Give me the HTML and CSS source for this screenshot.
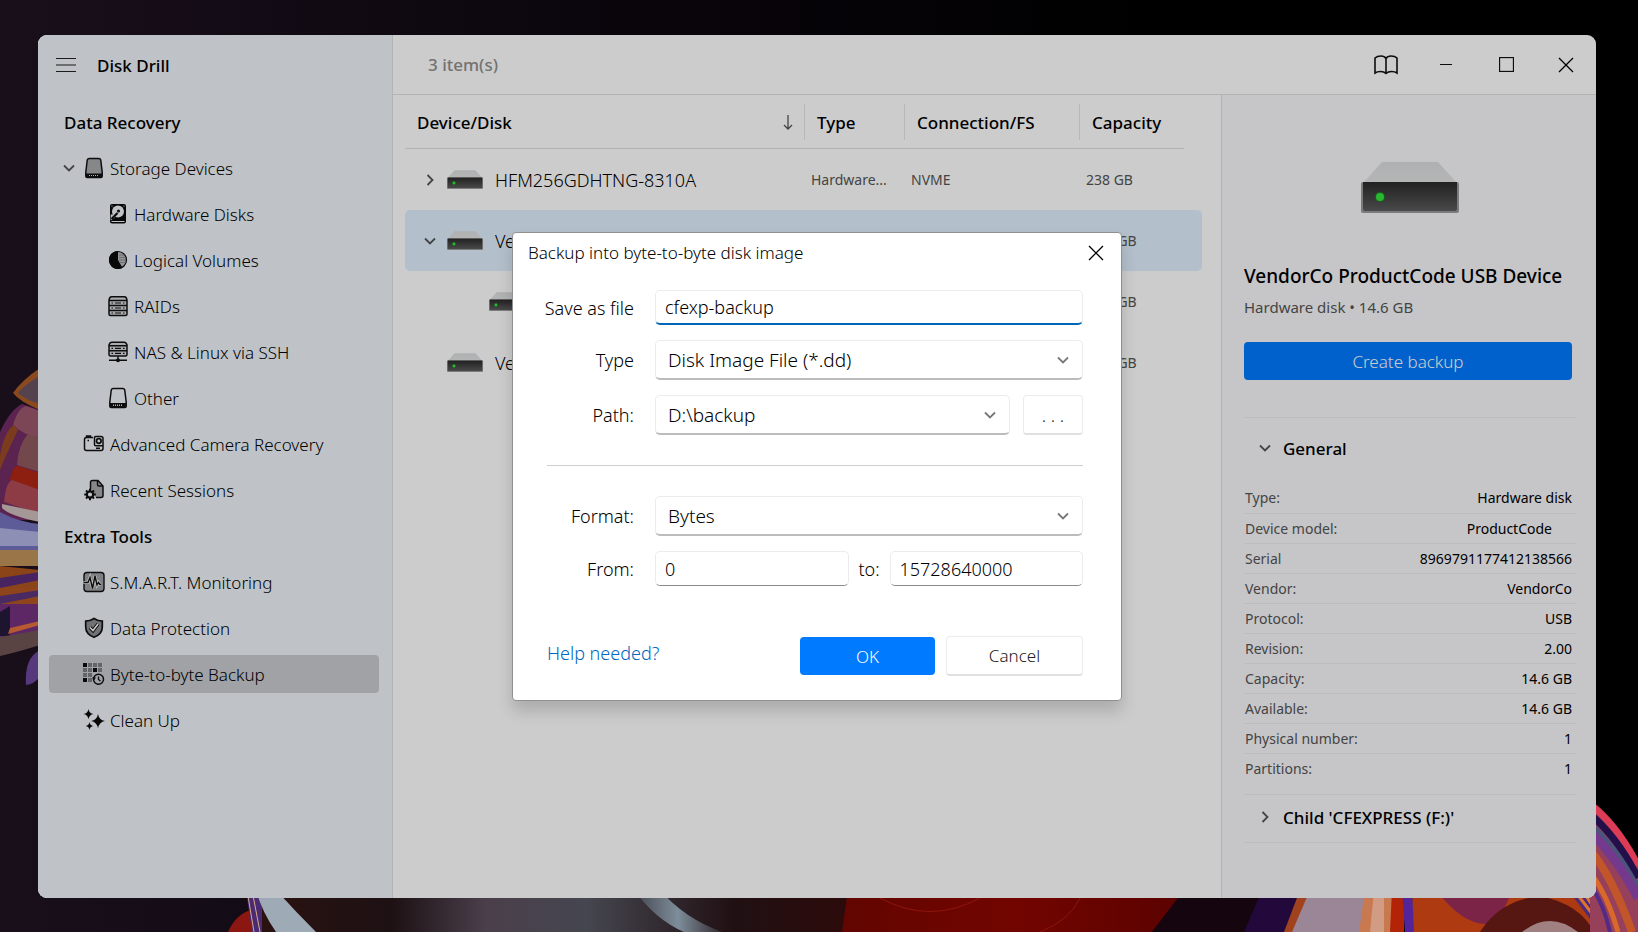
FILE: index.html
```html
<!DOCTYPE html>
<html lang="en">
<head>
    <meta charset="UTF-8">
    <meta name="viewport" content="width=device-width, initial-scale=1.0">
    <title>Disk Drill</title>
    <link rel="stylesheet" href="styles.css">
</head>
<body>

<!-- shared icons -->
<svg class="sprite" aria-hidden="true">
    <defs>
        <linearGradient id="diskFront" x1="0" y1="0" x2="0" y2="1">
            <stop offset="0" stop-color="#2a2a2a"/>
            <stop offset="1" stop-color="#5c5c5c"/>
        </linearGradient>
        <linearGradient id="diskTop" x1="0" y1="0" x2="0" y2="1">
            <stop offset="0" stop-color="#dcddde"/>
            <stop offset="1" stop-color="#e2e3e4"/>
        </linearGradient>
    </defs>
    <symbol id="disk" viewBox="0 0 98 51">
        <path d="M21 0h56l19 21H2z" fill="url(#diskTop)"/>
        <rect x="0" y="20" width="98" height="31" rx="2" fill="#9a9a9c"/>
        <path d="M2 20h94v27q0 2-2 2H4q-2 0-2-2z" fill="url(#diskFront)"/>
        <circle cx="19" cy="35" r="5" fill="#1d7a22"/>
        <circle cx="19" cy="35" r="4" fill="#35e53c"/>
    </symbol>
    <symbol id="chev-down" viewBox="0 0 12 12">
        <path d="M1 3.500l5 5 5-5" fill="none" stroke="currentColor" stroke-width="1.800"/>
    </symbol>
    <symbol id="chev-right" viewBox="0 0 12 12">
        <path d="M3.500 1l5 5-5 5" fill="none" stroke="currentColor" stroke-width="1.800"/>
    </symbol>
    <symbol id="close" viewBox="0 0 16 16">
        <path d="M1 1l14 14M15 1L1 15" fill="none" stroke="currentColor" stroke-width="1.300"/>
    </symbol>
</svg>

<svg class="wallpaper" viewBox="0 0 1638 932" preserveAspectRatio="none" aria-hidden="true">
    <defs>
        <linearGradient id="night" x1="0" x2="1" y1="0" y2="0">
            <stop offset="0" stop-color="#190f1b"/>
            <stop offset=".35" stop-color="#0b060d"/>
            <stop offset=".7" stop-color="#000"/>
        </linearGradient>
        <linearGradient id="haze" x1="0" x2="1" y1="0" y2="0">
            <stop offset="0" stop-color="#2b1210"/>
            <stop offset=".22" stop-color="#1d1114"/>
            <stop offset=".38" stop-color="#4a3f4b"/>
            <stop offset=".55" stop-color="#45464f"/>
            <stop offset=".8" stop-color="#201013"/>
            <stop offset="1" stop-color="#2d0a0a"/>
        </linearGradient>
        <linearGradient id="wine" x1="0" x2="1" y1="0" y2="0">
            <stop offset="0" stop-color="#620500"/>
            <stop offset=".5" stop-color="#720500"/>
            <stop offset="1" stop-color="#5a0200"/>
        </linearGradient>
        <linearGradient id="streak" x1="0" x2="1" y1="0" y2="0">
            <stop offset="0" stop-color="#45464f"/>
            <stop offset=".5" stop-color="#7d8d9a"/>
            <stop offset="1" stop-color="#33292f"/>
        </linearGradient>
    </defs>
    <rect width="1638" height="932" fill="url(#night)"/>
    <!-- left bloom -->
    <path d="M40 368Q22 380 13 393Q20 402 40 410z" fill="#8a4a1d"/>
    <path d="M40 376Q25 384 18 393Q26 400 40 404z" fill="#54424f"/>
    <path d="M0 432Q10 410 22 404L40 410V520H0z" fill="#5a2350"/>
    <path d="M13 425Q18 408 26 406L40 411V438Q25 436 13 425z" fill="#7c4657"/>
    <path d="M0 455Q5 430 14 425L18 430Q6 455 0 470z" fill="#7a3b1e"/>
    <path d="M17 465Q18 445 28 434L40 438V472z" fill="#73484c"/>
    <path d="M10 480Q12 466 18 466L40 473V492z" fill="#8c1f10"/>
    <path d="M4 502Q6 482 12 480L40 490V514z" fill="#8d3c46"/>
    <path d="M2 504L40 512V522Q10 516 2 508z" fill="#a49795"/>
    <path d="M0 512Q18 522 40 524V550H0z" fill="#5d5b98"/>
    <path d="M0 528L40 532V546H0z" fill="#8d90b4"/>
    <path d="M0 550H40V566H0z" fill="#9a7547"/>
    <path d="M0 566L40 570V592H0z" fill="#8a4418"/>
    <path d="M0 578L40 572V580L0 588z" fill="#472461"/>
    <path d="M0 588H40V608H0z" fill="#8f451c"/>
    <path d="M0 596L40 590V596L0 604z" fill="#4a2a63"/>
    <path d="M0 604H40V638H0z" fill="#5c2764"/>
    <path d="M0 612L10 606V636H0z" fill="#1d1530"/>
    <path d="M10 628L40 621V625L8 634z" fill="#b75a31"/>
    <path d="M0 637L40 630V645Q18 652 0 656z" fill="#5a4443"/>
    <path d="M26 685Q24 658 40 650V677Q34 684 26 685z" fill="#55397c"/>
    <!-- lower edge -->
    <path d="M228 932Q236 913 256 908V932z" fill="#8c1712"/>
    <path d="M262 890H852V932H262z" fill="url(#haze)"/>
    <path d="M634 890H660Q684 918 722 932H684Q656 920 634 890z" fill="url(#streak)"/>
    <path d="M246 890H262V932H252z" fill="#4a2a70"/>
    <path d="M247 890L254 932M252 890L260 932" stroke="#d9ab8e" stroke-width="1"/>
    <path d="M256 890H276Q296 912 316 932H276Q262 912 256 890z" fill="#9eabb6"/>
    <path d="M848 890H1186L1152 932H842z" fill="url(#wine)"/>
    <path d="M880 898Q930 925 980 898M1040 932Q1070 920 1080 898" fill="none" stroke="#8d160c"/>
    <path d="M1184 890H1305L1284 932H1152z" fill="#15050f"/>
    <path d="M1262 890H1302L1286 932H1244z" fill="#23083b"/>
    <path d="M1300 890H1312L1294 932H1284z" fill="#a0421d"/>
    <path d="M1310 890H1366L1360 932H1292z" fill="#9b8697"/>
    <path d="M1365 890H1394V932H1359z" fill="#c9794f"/>
    <path d="M1374 890H1384V932H1370z" fill="#d29b83"/>
    <path d="M1392 890H1404V932H1390z" fill="#b32306"/>
    <path d="M1402 890H1412L1415 932H1405z" fill="#54259a"/>
    <path d="M1412 890H1600V932H1414z" fill="#ae3a12"/>
    <path d="M1436 890Q1462 924 1486 924Q1502 920 1512 890z" fill="#7b2448"/>
    <path d="M1480 932Q1500 900 1540 896Q1580 904 1594 932z" fill="#561612"/>
    <path d="M1522 932Q1550 910 1578 932z" fill="#a08080"/>
    <path d="M1568 890L1600 932H1614L1592 890z" fill="#4c2c78"/>
    <path d="M1574 890L1606 932M1582 890L1610 932" stroke="#e07331" stroke-width="3"/>
    <!-- right bloom -->
    <path d="M1590 802Q1618 822 1638 862V932H1590z" fill="#96405c"/>
    <path d="M1590 804Q1618 826 1638 866" fill="none" stroke="#dc3c55" stroke-width="7"/>
    <path d="M1590 814Q1618 838 1638 878" fill="none" stroke="#23104a" stroke-width="7"/>
    <path d="M1590 824Q1616 846 1638 888" fill="none" stroke="#4c547c" stroke-width="5"/>
    <path d="M1590 832Q1616 856 1638 898" fill="none" stroke="#74398c" stroke-width="9"/>
    <path d="M1590 850Q1612 876 1632 932" fill="none" stroke="#c2562a" stroke-width="8"/>
    <path d="M1590 872Q1608 896 1618 932" fill="none" stroke="#d9692b" stroke-width="5"/>
    <path d="M1590 884Q1604 904 1610 932" fill="none" stroke="#532a86" stroke-width="4"/>
</svg>

<div class="window">
    <aside class="sidebar">
        <div class="brand">
            <button class="icon-btn" aria-label="Menu">
                <svg width="20" height="14" viewBox="0 0 20 14"><path d="M0 .5h20M0 7h20M0 13.500h20" stroke="#222" stroke-width="1.200"/></svg>
            </button>
            <h1>Disk Drill</h1>
        </div>
        <nav>
            <h2>Data Recovery</h2>
            <a href="#" class="nav-item parent">
                <svg class="chev" width="12" height="12"><use href="#chev-down"/></svg>
                <svg class="ico" viewBox="0 0 22 22"><path d="M4.200 3.500Q4.400 1.500 6.400 1.500h9.200q2 0 2.200 2L19.200 15v4q0 1.500-1.500 1.500H4.300q-1.500 0-1.500-1.500v-4z" fill="#a8a9ac" stroke="#111" stroke-width="1.500"/><path d="M2.800 16.500h16.400v3.700H2.800z" fill="#111"/><path d="M6 18.500h9" stroke="#ddd" stroke-width="1" stroke-dasharray="1 1"/></svg>
                Storage Devices
            </a>
            <a href="#" class="nav-item child">
                <svg class="ico" viewBox="0 0 22 22"><rect x="3" y="1" width="16" height="19.500" rx="2" fill="#0a0a0a"/><circle cx="11" cy="8.500" r="6" fill="#eff4f9"/><path d="M3.700 11.500h5l-1 3-4 3z" fill="#eff4f9"/><circle cx="11.500" cy="8" r="1.500" fill="#0a0a0a"/><path d="M4.500 16L10.500 10" stroke="#0a0a0a" stroke-width="2.200"/><path d="M4.500 18.500h13" stroke="#eff4f9" stroke-width="1.200"/><circle cx="5" cy="3" r=".6" fill="#fff"/><circle cx="17" cy="3" r=".6" fill="#fff"/></svg>
                Hardware Disks
            </a>
            <a href="#" class="nav-item child">
                <svg class="ico" viewBox="0 0 22 22"><circle cx="11" cy="11" r="8.500" fill="#b9bbbf" stroke="#0a0a0a" stroke-width="1.200"/><path d="M11 2A9 9 0 1 0 15.500 18.800L11 11z" fill="#0a0a0a"/><path d="M12 6h6M12 8.500h7M12 11h7M13 13.500h6" stroke="#777" stroke-width=".7"/></svg>
                Logical Volumes
            </a>
            <a href="#" class="nav-item child">
                <svg class="ico" viewBox="0 0 22 22"><path d="M4.500 1.800h13Q19.500 2 20 5v14q0 1.500-1.500 1.500h-15Q2 20.500 2 19V5q.5-3 2.500-3.200z" fill="#d4d6da" stroke="#111" stroke-width="1.500"/><path d="M2 5.500h18M2 10.500h18M2 15.500h18" stroke="#111" stroke-width="1.500"/><path d="M4.500 8h1.500M8 8h6M16 8h1.500M4.500 13h1.500M8 13h6M16 13h1.500M4.500 18h1.500M8 18h6M16 18h1.500" stroke="#111" stroke-width="1.200"/></svg>
                RAIDs
            </a>
            <a href="#" class="nav-item child">
                <svg class="ico" viewBox="0 0 22 22"><path d="M4.500 1.200h13Q19.500 1.500 20 4v9.500q0 1.500-1.500 1.500h-15Q2 15 2 13.500V4q.5-2.500 2.500-2.800z" fill="#d4d6da" stroke="#111" stroke-width="1.500"/><path d="M2 4.700h18M2 9.800h18" stroke="#111" stroke-width="1.500"/><path d="M4.500 7.300h1.500M8 7.300h6M16 7.300h1.500M4.500 12.400h1.500M8 12.400h6M16 12.400h1.500" stroke="#111" stroke-width="1.200"/><path d="M11 15v4M2 19.200h18" stroke="#111" stroke-width="1.400"/><circle cx="11" cy="19.200" r="2" fill="#111"/></svg>
                NAS &amp; Linux via SSH
            </a>
            <a href="#" class="nav-item child">
                <svg class="ico" viewBox="0 0 22 22"><path d="M4.200 3.500Q4.400 1.500 6.400 1.500h9.200q2 0 2.200 2L19.200 15v4q0 1.500-1.500 1.500H4.300q-1.500 0-1.500-1.500v-4z" fill="none" stroke="#111" stroke-width="1.500"/><path d="M2.800 16h16.400v4.200H2.800z" fill="#111"/><path d="M6 18.300h9" stroke="#ddd" stroke-width="1.500" stroke-dasharray="1 1"/></svg>
                Other
            </a>
            <a href="#" class="nav-item">
                <svg class="ico" viewBox="0 0 22 22"><path d="M10 4.500H3.500Q1.500 4.500 1.500 6.500v9q0 2 2 2H18q2 0 2-2V5.500Q20 3.500 18 3.500h-5.500q-1 0-1 1v7q0 1.300 1.300 1.300H20M3.500 4v-1h4v1M4.500 7.500h1.500M13 15.200h4" fill="none" stroke="#111" stroke-width="1.500"/><circle cx="15.800" cy="8" r="2.300" fill="none" stroke="#111" stroke-width="1.700"/></svg>
                Advanced Camera Recovery
            </a>
            <a href="#" class="nav-item">
                <svg class="ico" viewBox="0 0 22 22"><path d="M7.500 10V3.500q0-2 2-2h5.500l5 5.500v9.500q0 2-2 2h-5" fill="#a8a9ac" stroke="#111" stroke-width="1.500"/><path d="M14.500 2v3.500q0 1.500 1.500 1.500h4" fill="none" stroke="#111" stroke-width="1.400"/><circle cx="7" cy="15.500" r="3.200" fill="#eff4f9" stroke="#111" stroke-width="2.200"/><path d="M7 9.700v2.500M7 18.800v2.500M1.200 15.500h2.500M10.300 15.500h2.500M3 11.500l1.500 1.500M9.500 18l1.500 1.500M11 11.500L9.500 13M4.500 18L3 19.500" stroke="#111" stroke-width="2"/></svg>
                Recent Sessions
            </a>

            <h2>Extra Tools</h2>
            <a href="#" class="nav-item">
                <svg class="ico" viewBox="0 0 22 22"><rect x="1" y="1.500" width="20" height="19" rx="3" fill="#a0a2a5" stroke="#111" stroke-width="1.400"/><path d="M.5 11.500H5L7 6.500l2.500 11L12 5l2 9 1.500-2.500 1.500 2H18" fill="none" stroke="#eee" stroke-width="3"/><path d="M1 11.500h4L7 6.500l2.500 11L12 5l2 9 1.500-2.500 1.500 2H18" fill="none" stroke="#111" stroke-width="1.400"/></svg>
                S.M.A.R.T. Monitoring
            </a>
            <a href="#" class="nav-item">
                <svg class="ico" viewBox="0 0 22 22"><path d="M11 1.500Q15 4.200 19.300 4.200V10q0 7-8.300 10.300Q2.700 17 2.700 10V4.200Q7 4.200 11 1.500z" fill="#8d8f93" stroke="#111" stroke-width="1.700"/><path d="M7 10.500l3 3 5-6.500" fill="none" stroke="#111" stroke-width="3.500"/><path d="M7 10.500l3 3 5-6.500" fill="none" stroke="#fff" stroke-width="1.500"/></svg>
                Data Protection
            </a>
            <a href="#" class="nav-item active">
                <svg class="ico" viewBox="0 0 22 22"><path d="M0 0h4v4H0zM10 5h4v4h-4zM0 15h4v4H0z" fill="#0a0a0a"/><path d="M5 0h4v4H5zM10 0h4v4h-4zM15 0h4v4h-4zM0 5h4v4H0zM5 5h4v4H5zM15 5h4v4h-4zM0 10h4v4H0zM5 10h4v4H5zM5 15h4v4H5z" fill="#7d7f84"/><circle cx="15.500" cy="16.300" r="5" fill="#c8cbd0" stroke="#111" stroke-width="1.500"/><path d="M15.500 13.500v3l2 1.500" fill="none" stroke="#111" stroke-width="1.300"/><path d="M9 14.500h4l-2 3z" fill="#111"/></svg>
                Byte-to-byte Backup
            </a>
            <a href="#" class="nav-item">
                <svg class="ico" viewBox="0 0 22 22"><path d="M15 5q1 6 7 7-6 1-7 7.500-1-6.500-7-7.500 6-1 7-7zM5.500 0q.7 4.300 5 5-4.300.7-5 5.200-.7-4.500-5-5.200 4.300-.7 5-5zM6.500 13q.5 3.500 3.800 4-3.300.5-3.800 4-.5-3.500-3.800-4 3.300-.5 3.800-4z" fill="#0a0a0a"/></svg>
                Clean Up
            </a>
        </nav>
    </aside>

    <div class="content">
        <header class="titlebar">
            <span class="count">3 item(s)</span>
            <div class="controls">
                <button class="icon-btn" aria-label="Guide">
                    <svg width="24" height="20" viewBox="0 0 24 20"><path d="M12 3.500Q10.500 1 7 1 3 1 1 3v15q2-1.500 5.500-1.500T12 18.300q2-1.800 5.500-1.800T23 18V3q-2-2-6-2-3.500 0-5 2.500zv14.500" fill="none" stroke="#111" stroke-width="1.600"/></svg>
                </button>
                <button class="icon-btn" aria-label="Minimize">
                    <svg width="12" height="1"><path d="M0 .5h12" stroke="#111" stroke-width="1"/></svg>
                </button>
                <button class="icon-btn" aria-label="Maximize">
                    <svg width="15" height="15"><rect x=".5" y=".5" width="14" height="14" fill="none" stroke="#111" stroke-width="1.300"/></svg>
                </button>
                <button class="icon-btn" aria-label="Close window">
                    <svg width="16" height="16"><use href="#close"/></svg>
                </button>
            </div>
        </header>

        <div class="panes">
            <main>
                <table class="devices">
                    <colgroup>
                        <col>
                        <col class="col-type">
                        <col class="col-conn">
                        <col class="col-cap">
                    </colgroup>
                    <thead>
                        <tr>
                            <th scope="col">
                                <div class="sortable">
                                    Device/Disk
                                    <svg width="10" height="15" viewBox="0 0 10 15"><path d="M5 0v14M1 10l4 4 4-4" fill="none" stroke="#555" stroke-width="1.300"/></svg>
                                </div>
                            </th>
                            <th scope="col">Type</th>
                            <th scope="col">Connection/FS</th>
                            <th scope="col">Capacity</th>
                        </tr>
                    </thead>
                    <tbody>
                        <tr>
                            <td>
                                <div class="device">
                                    <svg class="chev" width="12" height="12"><use href="#chev-right"/></svg>
                                    <svg class="disk-sm"><use href="#disk"/></svg>
                                    HFM256GDHTNG-8310A
                                </div>
                            </td>
                            <td>Hardware...</td>
                            <td>NVME</td>
                            <td>238 GB</td>
                        </tr>
                        <tr class="selected">
                            <td>
                                <div class="device">
                                    <svg class="chev" width="12" height="12"><use href="#chev-down"/></svg>
                                    <svg class="disk-sm"><use href="#disk"/></svg>
                                    VendorCo ProductCode U...
                                </div>
                            </td>
                            <td>Hardware...</td>
                            <td>USB</td>
                            <td>14.6 GB</td>
                        </tr>
                        <tr>
                            <td>
                                <div class="device nested">
                                    <svg class="disk-sm"><use href="#disk"/></svg>
                                    CFEXPRESS (F:)
                                </div>
                            </td>
                            <td>Logical...</td>
                            <td>exFAT</td>
                            <td>14.6 GB</td>
                        </tr>
                        <tr>
                            <td>
                                <div class="device leaf">
                                    <svg class="disk-sm"><use href="#disk"/></svg>
                                    VendorCo ProductCode U...
                                </div>
                            </td>
                            <td>Hardware...</td>
                            <td>USB</td>
                            <td>14.6 GB</td>
                        </tr>
                    </tbody>
                </table>
            </main>

            <section class="details">
                <svg class="disk-lg"><use href="#disk"/></svg>
                <h2>VendorCo ProductCode USB Device</h2>
                <p class="subtitle">Hardware disk • 14.6 GB</p>
                <button class="primary">Create backup</button>

                <h3><svg class="chev" width="12" height="12"><use href="#chev-down"/></svg>General</h3>
                <table class="props">
                    <tr><th scope="row">Type:</th><td>Hardware disk</td></tr>
                    <tr><th scope="row">Device model:</th><td class="padded">ProductCode</td></tr>
                    <tr><th scope="row">Serial</th><td>8969791177412138566</td></tr>
                    <tr><th scope="row">Vendor:</th><td>VendorCo</td></tr>
                    <tr><th scope="row">Protocol:</th><td>USB</td></tr>
                    <tr><th scope="row">Revision:</th><td>2.00</td></tr>
                    <tr><th scope="row">Capacity:</th><td>14.6 GB</td></tr>
                    <tr><th scope="row">Available:</th><td>14.6 GB</td></tr>
                    <tr><th scope="row">Physical number:</th><td>1</td></tr>
                    <tr><th scope="row">Partitions:</th><td>1</td></tr>
                </table>
                <h3 class="collapsed"><svg class="chev" width="12" height="12"><use href="#chev-right"/></svg>Child 'CFEXPRESS (F:)'</h3>
            </section>
        </div>
    </div>

    <div class="overlay">
        <div class="dialog" role="dialog" aria-labelledby="dialog-title">
            <div class="dialog-head">
                <h2 id="dialog-title">Backup into byte-to-byte disk image</h2>
                <button class="icon-btn" aria-label="Close">
                    <svg width="16" height="16"><use href="#close"/></svg>
                </button>
            </div>
            <form>
                <div class="form-row">
                    <label for="file">Save as file</label>
                    <input type="text" id="file" class="focused" value="cfexp-backup">
                </div>
                <div class="form-row">
                    <label for="type">Type</label>
                    <div class="select">
                        <select id="type"><option>Disk Image File (*.dd)</option></select>
                        <svg width="12" height="12"><use href="#chev-down"/></svg>
                    </div>
                </div>
                <div class="form-row">
                    <label for="path">Path:</label>
                    <div class="select">
                        <select id="path"><option>D:\backup</option></select>
                        <svg width="12" height="12"><use href="#chev-down"/></svg>
                    </div>
                    <button type="button" class="secondary browse">. . .</button>
                </div>
                <hr>
                <div class="form-row">
                    <label for="format">Format:</label>
                    <div class="select">
                        <select id="format"><option>Bytes</option></select>
                        <svg width="12" height="12"><use href="#chev-down"/></svg>
                    </div>
                </div>
                <div class="form-row">
                    <label for="from">From:</label>
                    <input type="text" id="from" value="0">
                    <label for="to" class="to">to:</label>
                    <input type="text" id="to" value="15728640000">
                </div>
                <div class="dialog-foot">
                    <a href="#">Help needed?</a>
                    <button type="submit" class="primary">OK</button>
                    <button type="button" class="secondary">Cancel</button>
                </div>
            </form>
        </div>
    </div>
</div>

</body>
</html>
```
FILE: styles.css
```css
* {
    box-sizing: border-box;
}

body {
    margin: 0;
    min-height: 100vh;
    padding: 35px 42px 34px 38px;
    display: flex;
    background: #0b060d;
    font-family: "Noto Sans", "Open Sans", sans-serif;
    font-size: 17px;
    font-weight: 300;
    color: #000;
}

h1, h2, h3, p {
    margin: 0;
    font-size: 17px;
    font-weight: 500;
}

a {
    color: inherit;
    text-decoration: none;
}

button, input, select {
    font: inherit;
    color: inherit;
    margin: 0;
}

.sprite {
    position: absolute;
    width: 0;
    height: 0;
}

.wallpaper {
    position: absolute;
    top: 0;
    left: 0;
    width: 100%;
    height: 100%;
}

.window {
    position: relative;
    flex: 1;
    display: flex;
    background: #fff;
    border-radius: 9px;
    overflow: hidden;
}

.icon-btn {
    display: flex;
    align-items: center;
    justify-content: center;
    padding: 0;
    border: none;
    background: none;
}

.chev {
    flex: none;
    color: #555;
}

/* sidebar */
.sidebar {
    width: 355px;
    flex: none;
    padding: 0 13px 0 11px;
    background: #eff4f9;
    border-right: 1px solid #dfe2e6;
}

.brand {
    display: flex;
    align-items: center;
    height: 60px;
    padding-left: 7px;
    gap: 21px;
}

nav {
    padding-top: 8px;
}

nav h2 {
    margin-top: -3px;
    line-height: 46px;
    padding-left: 15px;
}

.nav-item {
    display: flex;
    align-items: center;
    height: 38px;
    margin-bottom: 8px;
    padding-left: 34px;
    gap: 5px;
    border-radius: 4px;
    white-space: nowrap;
}

h2 + .nav-item {
    margin-top: 3px;
}

.nav-item.parent {
    padding-left: 14px;
}

.nav-item.parent .chev {
    margin-right: 3px;
}

.nav-item.child {
    padding-left: 58px;
}

.nav-item.active {
    background: #c8cbd0;
}

.ico {
    width: 22px;
    height: 22px;
    flex: none;
}

/* content */
.content {
    flex: 1;
    display: flex;
    flex-direction: column;
    min-width: 0;
}

.titlebar {
    display: flex;
    justify-content: space-between;
    height: 60px;
    border-bottom: 1px solid #dfe0e2;
}

.count {
    padding-left: 35px;
    line-height: 60px;
    font-weight: 500;
    color: #8f8f8f;
}

.controls {
    display: flex;
}

.controls .icon-btn {
    width: 60px;
}

.panes {
    flex: 1;
    display: flex;
}

main {
    flex: 1;
    min-width: 0;
    padding: 0 19px 0 12px;
}

.devices {
    width: 100%;
    table-layout: fixed;
    border-collapse: collapse;
}

.col-type {
    width: 100px;
}

.col-conn {
    width: 175px;
}

.col-cap {
    width: 123px;
}

.devices thead tr {
    height: 54px;
    background: linear-gradient(#dfe0e2, #dfe0e2) no-repeat 0 100% / calc(100% - 18px) 1px;
}

.devices th {
    padding: 0 0 0 12px;
    text-align: left;
    font-weight: 500;
}

.devices th + th {
    padding-left: 13px;
    background: linear-gradient(#e6e6e8, #e6e6e8) no-repeat 0 50% / 1px 36px;
}

.sortable {
    display: flex;
    align-items: center;
    justify-content: space-between;
    padding-right: 11px;
}

.devices tbody tr {
    height: 61px;
}

.devices td {
    padding: 0 0 0 7px;
    font-size: 14px;
    font-weight: 400;
    color: #555;
    white-space: nowrap;
}

.device {
    display: flex;
    align-items: center;
    padding-left: 12px;
    font-size: 18px;
    font-weight: 300;
    color: #000;
}

.device .chev {
    margin-right: 11px;
}

.device.nested {
    padding-left: 77px;
}

.device.leaf {
    padding-left: 35px;
}

.disk-sm {
    width: 36px;
    height: 19px;
    flex: none;
    margin-right: 12px;
}

.selected td {
    background: #e0f1fe;
}

.selected td:first-child {
    border-radius: 5px 0 0 5px;
}

.selected td:last-child {
    border-radius: 0 5px 5px 0;
}

/* details */
.details {
    width: 375px;
    flex: none;
    padding: 67px 20px 0 22px;
    background: #f8f8fa;
    border-left: 1px solid #dfe0e2;
}

.disk-lg {
    display: block;
    width: 98px;
    height: 51px;
    margin: 0 auto 50px;
}

.details h2 {
    font-size: 19px;
    line-height: 26px;
    white-space: nowrap;
}

.subtitle {
    margin-top: 8px;
    font-size: 15px;
    font-weight: 400;
    line-height: 20px;
    color: #555;
}

.primary {
    height: 38px;
    border: none;
    border-radius: 4px;
    background: #007aff;
    color: #fff;
}

.details .primary {
    display: block;
    width: calc(100% - 4px);
    margin: 25px 0 37px;
}

.details h3 {
    display: flex;
    align-items: center;
    height: 61px;
    padding-left: 15px;
    gap: 12px;
    border-top: 1px solid #ebebed;
}

.details h3.collapsed {
    height: 49px;
    padding-bottom: 3px;
    border-bottom: 1px solid #ebebed;
}

.props {
    width: 100%;
    margin: 5px 0 11px;
    border-collapse: collapse;
    font-size: 14px;
    font-weight: 400;
}

.props tr {
    height: 30px;
}

.props tr + tr {
    border-top: 1px solid #ebebed;
}

.props th {
    padding: 0 0 0 1px;
    text-align: left;
    font-weight: 400;
    color: #555;
}

.props td {
    padding: 0 4px 0 0;
    text-align: right;
}

.props td.padded {
    padding-right: 24px;
}

/* dialog */
.overlay {
    position: absolute;
    inset: 0;
    display: grid;
    place-items: center;
    background: rgba(0, 0, 0, 0.2);
}

.dialog {
    width: 610px;
    background: #fff;
    border: 1px solid #909090;
    border-radius: 4px;
    box-shadow: 0 10px 16px rgba(0, 0, 0, 0.16);
    font-size: 18px;
}

.dialog-head {
    display: flex;
    align-items: center;
    justify-content: space-between;
    height: 39px;
    padding: 0 17px 0 15px;
}

.dialog h2 {
    font-weight: 300;
}

form {
    padding: 18px 38px 24px 30px;
}

.form-row {
    display: flex;
    align-items: center;
    margin-bottom: 15px;
}

.form-row label {
    width: 91px;
    flex: none;
    margin-right: 21px;
    text-align: right;
    white-space: nowrap;
}

.form-row .to {
    width: 41px;
    margin: 0;
    text-align: center;
}

input {
    flex: 1;
    min-width: 0;
    height: 35px;
    padding: 0 9px;
    background: #fff;
    border: 1px solid #ececec;
    border-bottom-color: #8a8a8a;
    border-radius: 5px;
    outline: none;
}

input.focused {
    border-bottom: 2px solid #0067b8;
}

.select {
    position: relative;
    flex: 1;
}

.select select {
    display: block;
    width: 100%;
    height: 40px;
    padding: 0 12px;
    appearance: none;
    background: #fff;
    border: 1px solid #ececec;
    border-bottom: 2px solid #bcbcbc;
    border-radius: 5px;
    font-size: 19px;
}

.select svg {
    position: absolute;
    right: 14px;
    top: 14px;
    color: #777;
    pointer-events: none;
}

.secondary {
    height: 40px;
    background: #fff;
    border: 1px solid #ececec;
    border-bottom: 2px solid #e0e0e0;
    border-radius: 4px;
    color: #222;
}

.browse {
    width: 60px;
    margin-left: 13px;
}

hr {
    margin: 30px 0 30px 4px;
    border: none;
    border-top: 1px solid #cfcfcf;
}

.dialog-foot {
    display: flex;
    align-items: center;
    margin-top: 50px;
    padding-left: 4px;
    gap: 11px;
}

.dialog-foot a {
    align-self: flex-start;
    margin-right: auto;
    line-height: 34px;
    color: #0067c0;
}

.dialog-foot button {
    font-size: 17px;
}

.dialog-foot .primary {
    width: 135px;
}

.dialog-foot .secondary {
    width: 137px;
}
```
